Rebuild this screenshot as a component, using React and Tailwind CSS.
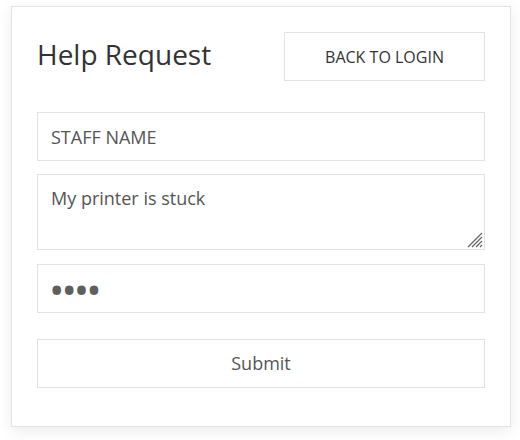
import React from 'react';

const App = () => {
  return (
    <div className="min-h-screen bg-white pt-[6px] pl-[11px] font-['Open_Sans','Noto_Sans',sans-serif]">
      <div className="w-[500px] h-[421px] bg-white border border-[#e3e3e3] shadow-[0_4px_14px_rgba(0,0,0,0.08)] px-[25px] pt-[25px]">
        {/* header */}
        <div className="flex items-center justify-between h-[49px]">
          <h1 className="text-[28px] leading-none text-[#333] -mt-[6px]">Help Request</h1>
          <button className="w-[201px] h-[49px] border border-[#e3e3e3] bg-white text-[16px] text-[#333]">
            BACK TO LOGIN
          </button>
        </div>

        <form className="mt-[31px] flex flex-col" onSubmit={(e) => e.preventDefault()}>
          <input
            type="text"
            placeholder="STAFF NAME"
            className="h-[49px] w-[448px] border border-[#e3e3e3] px-[13px] text-[18px] text-[#555] placeholder:text-[#555] outline-none"
          />
          <div className="relative mt-[13px] w-[448px]">
            <textarea
              defaultValue="My printer is stuck"
              className="block h-[76px] w-[448px] resize-none border border-[#e3e3e3] px-[13px] pt-[10px] text-[18px] leading-[26px] text-[#555] outline-none"
            />
            {/* resize grip */}
            <svg className="absolute right-[2px] bottom-[2px] w-[17px] h-[17px]" viewBox="0 0 17 17">
              <g stroke="#666" strokeWidth="1.2">
                <line x1="16" y1="2" x2="2" y2="16" />
                <line x1="16" y1="6" x2="6" y2="16" />
                <line x1="16" y1="10" x2="10" y2="16" />
                <line x1="16" y1="14" x2="14" y2="16" />
              </g>
            </svg>
          </div>
          <input
            type="password"
            defaultValue="abcd"
            className="mt-[14px] h-[49px] w-[448px] border border-[#e3e3e3] pl-[11px] pr-[13px] text-[41px] leading-none tracking-[-3px] text-[#5f5f5f] outline-none"
          />
          <button
            type="submit"
            className="mt-[26px] h-[49px] w-[448px] border border-[#e3e3e3] bg-white text-[18px] text-[#555]"
          >
            Submit
          </button>
        </form>
      </div>
    </div>
  );
};

export default App;
